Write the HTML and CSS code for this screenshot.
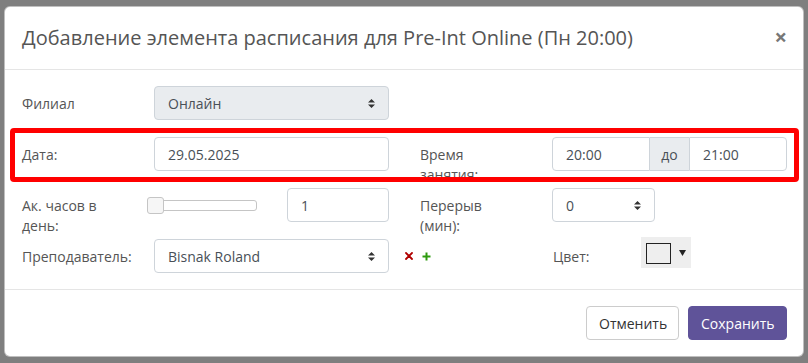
FILE: index.html
```html
<!DOCTYPE html>
<html lang="ru">
<head>
<meta charset="utf-8">
<link rel="stylesheet" href="styles.css">
</head>
<body>
<div class="modal">
  <div class="modal-header">
    <h4 class="modal-title">Добавление элемента расписания для Pre-Int Online (Пн 20:00)</h4>
    <span class="close">×</span>
  </div>
  <div class="modal-body">
    <div class="form-grid">
      <label class="lbl">Филиал</label>
      <div class="select disabled">
        <span>Онлайн</span>
        <svg class="arrows" width="7" height="9" viewBox="0 0 7 9"><path d="M3.5 0 L7 3.5 L0 3.5 Z M0 5.5 L7 5.5 L3.5 9 Z" fill="#333"/></svg>
      </div>
      <div class="spacer"></div>
      <div class="spacer"></div>
      <div class="spacer"></div>

      <label class="lbl">Дата:</label>
      <div class="input">29.05.2025</div>
      <div class="spacer"></div>
      <label class="lbl">Время занятия:</label>
      <div class="input-group">
        <div class="input ig-first">20:00</div>
        <div class="addon">до</div>
        <div class="input ig-last">21:00</div>
      </div>

      <label class="lbl">Ак. часов в день:</label>
      <div class="hours">
        <div class="slider"><span class="thumb"></span></div>
        <div class="input num">1</div>
      </div>
      <div class="spacer"></div>
      <label class="lbl">Перерыв (мин):</label>
      <div class="break-cell">
        <div class="select small">
          <span>0</span>
          <svg class="arrows" width="7" height="9" viewBox="0 0 7 9"><path d="M3.5 0 L7 3.5 L0 3.5 Z M0 5.5 L7 5.5 L3.5 9 Z" fill="#333"/></svg>
        </div>
      </div>

      <label class="lbl">Преподаватель:</label>
      <div class="select">
        <span>Bisnak Roland</span>
        <svg class="arrows" width="7" height="9" viewBox="0 0 7 9"><path d="M3.5 0 L7 3.5 L0 3.5 Z M0 5.5 L7 5.5 L3.5 9 Z" fill="#333"/></svg>
      </div>
      <div class="icons">
        <svg width="8" height="8" viewBox="0 0 8 8"><path d="M1 1 L7 7 M7 1 L1 7" stroke="#b00000" stroke-width="1.8" stroke-linecap="round"/></svg>
        <svg width="9" height="9" viewBox="0 0 9 9"><path d="M4.5 0.5 V8.5 M0.5 4.5 H8.5" stroke="#2e9a0e" stroke-width="2"/></svg>
      </div>
      <div class="color-cell">
        <label class="lbl color-lbl">Цвет:</label>
        <div class="picker">
          <span class="swatch"></span>
          <svg width="7" height="6" viewBox="0 0 7 6"><path d="M0 0 H7 L3.5 6 Z" fill="#222"/></svg>
        </div>
      </div>
    </div>
    <div class="highlight"></div>
  </div>
  <div class="modal-footer">
    <button class="btn btn-default">Отменить</button>
    <button class="btn btn-primary">Сохранить</button>
  </div>
</div>
</body>
</html>
```

FILE: styles.css
```css
* { box-sizing: border-box; }
html, body { margin: 0; height: 100%; }
body {
  background: #7f7f7f;
  padding: 6px 4px 0 4px;
  font-family: "Open Sans", "Noto Sans", sans-serif;
  font-size: 14px;
  line-height: 20px;
  color: #555;
  overflow: hidden;
}
.modal {
  width: 800px;
  background: #fff;
  border: 1px solid rgba(0,0,0,0.25);
  border-radius: 6px;
}
.modal-header {
  height: 63px;
  border-bottom: 1px solid #e5e5e5;
  padding: 0 16px 0 17px;
  display: flex;
  align-items: center;
  justify-content: space-between;
}
.modal-title {
  margin: 0;
  font-size: 20px;
  font-weight: 400;
  color: #555;
  line-height: 28px;
}
.close {
  font-size: 22px;
  font-weight: 700;
  color: #777;
  line-height: 1;
  margin-bottom: 4px;
}
.modal-body {
  position: relative;
  padding: 16px 16px 16px 17px;
}
.form-grid {
  display: grid;
  grid-template-columns: 132px 235px 31px 132px 235px;
  grid-template-rows: repeat(4, 34px);
  row-gap: 17px;
}
.lbl {
  padding-top: 8px;
  padding-right: 30px;
  line-height: 20px;
  color: #555;
}
.input, .select {
  height: 34px;
  border: 1px solid #ced4da;
  border-radius: 4px;
  padding: 1px 13px 0;
  display: flex;
  align-items: center;
  color: #495057;
  background: #fff;
}
.select { justify-content: space-between; padding-right: 13px; }
.select.disabled { background: #e9ecef; }
.arrows { flex: none; margin-top: -1px; }
.input-group { display: flex; }
.input-group .input { flex: 1; }
.ig-first { border-radius: 4px 0 0 4px; }
.ig-last { border-radius: 0 4px 4px 0; }
.addon {
  width: 39px;
  flex: none;
  background: #e9ecef;
  border-top: 1px solid #ced4da;
  border-bottom: 1px solid #ced4da;
  display: flex;
  align-items: center;
  justify-content: center;
  padding-top: 1px;
  color: #495057;
}
.hours {
  display: flex;
  justify-content: space-between;
  align-items: flex-start;
}
.slider {
  position: relative;
  width: 110px;
  height: 11px;
  margin-left: -7px;
  margin-top: 12px;
  border: 1px solid #c5c5c5;
  border-radius: 3px;
  background: #fff;
}
.thumb {
  position: absolute;
  left: -1px;
  top: -4px;
  width: 17px;
  height: 17px;
  border: 1px solid #c5c5c5;
  border-radius: 3px;
  background: #f6f6f6;
}
.num { width: 102px; }
.break-cell { display: flex; }
.select.small { width: 103px; }
.icons {
  grid-column: 3 / span 2;
  display: flex;
  align-items: center;
  gap: 9px;
  padding-left: 16px;
}
.color-cell {
  display: flex;
  align-items: flex-start;
}
.color-lbl { width: 89px; padding-left: 1px; padding-right: 0; }
.picker {
  width: 50px;
  height: 31px;
  margin-top: -2px;
  background: #eee;
  display: flex;
  align-items: center;
  padding-left: 5px;
  gap: 8px;
}
.swatch {
  width: 25px;
  height: 21px;
  border: 1px solid #222;
  background: #eee;
  margin-top: 1px;
}
.highlight {
  position: absolute;
  left: 5px;
  top: 58px;
  width: 789px;
  height: 54px;
  border: 5px solid #ff0000;
  border-radius: 4px;
  pointer-events: none;
}
.modal-footer {
  border-top: 1px solid #e5e5e5;
  padding: 16px 16px 16px 17px;
  display: flex;
  justify-content: flex-end;
  gap: 9px;
}
.btn {
  height: 34px;
  padding: 1px 12px 0;
  font-family: inherit;
  font-size: 14px;
  border-radius: 4px;
  border: 1px solid #ccc;
  line-height: 20px;
}
.btn-default { background: #fff; color: #333; width: 93px; }
.btn-primary { background: #5f5399; border-color: #5f5399; color: #fff; width: 99px; }
```
